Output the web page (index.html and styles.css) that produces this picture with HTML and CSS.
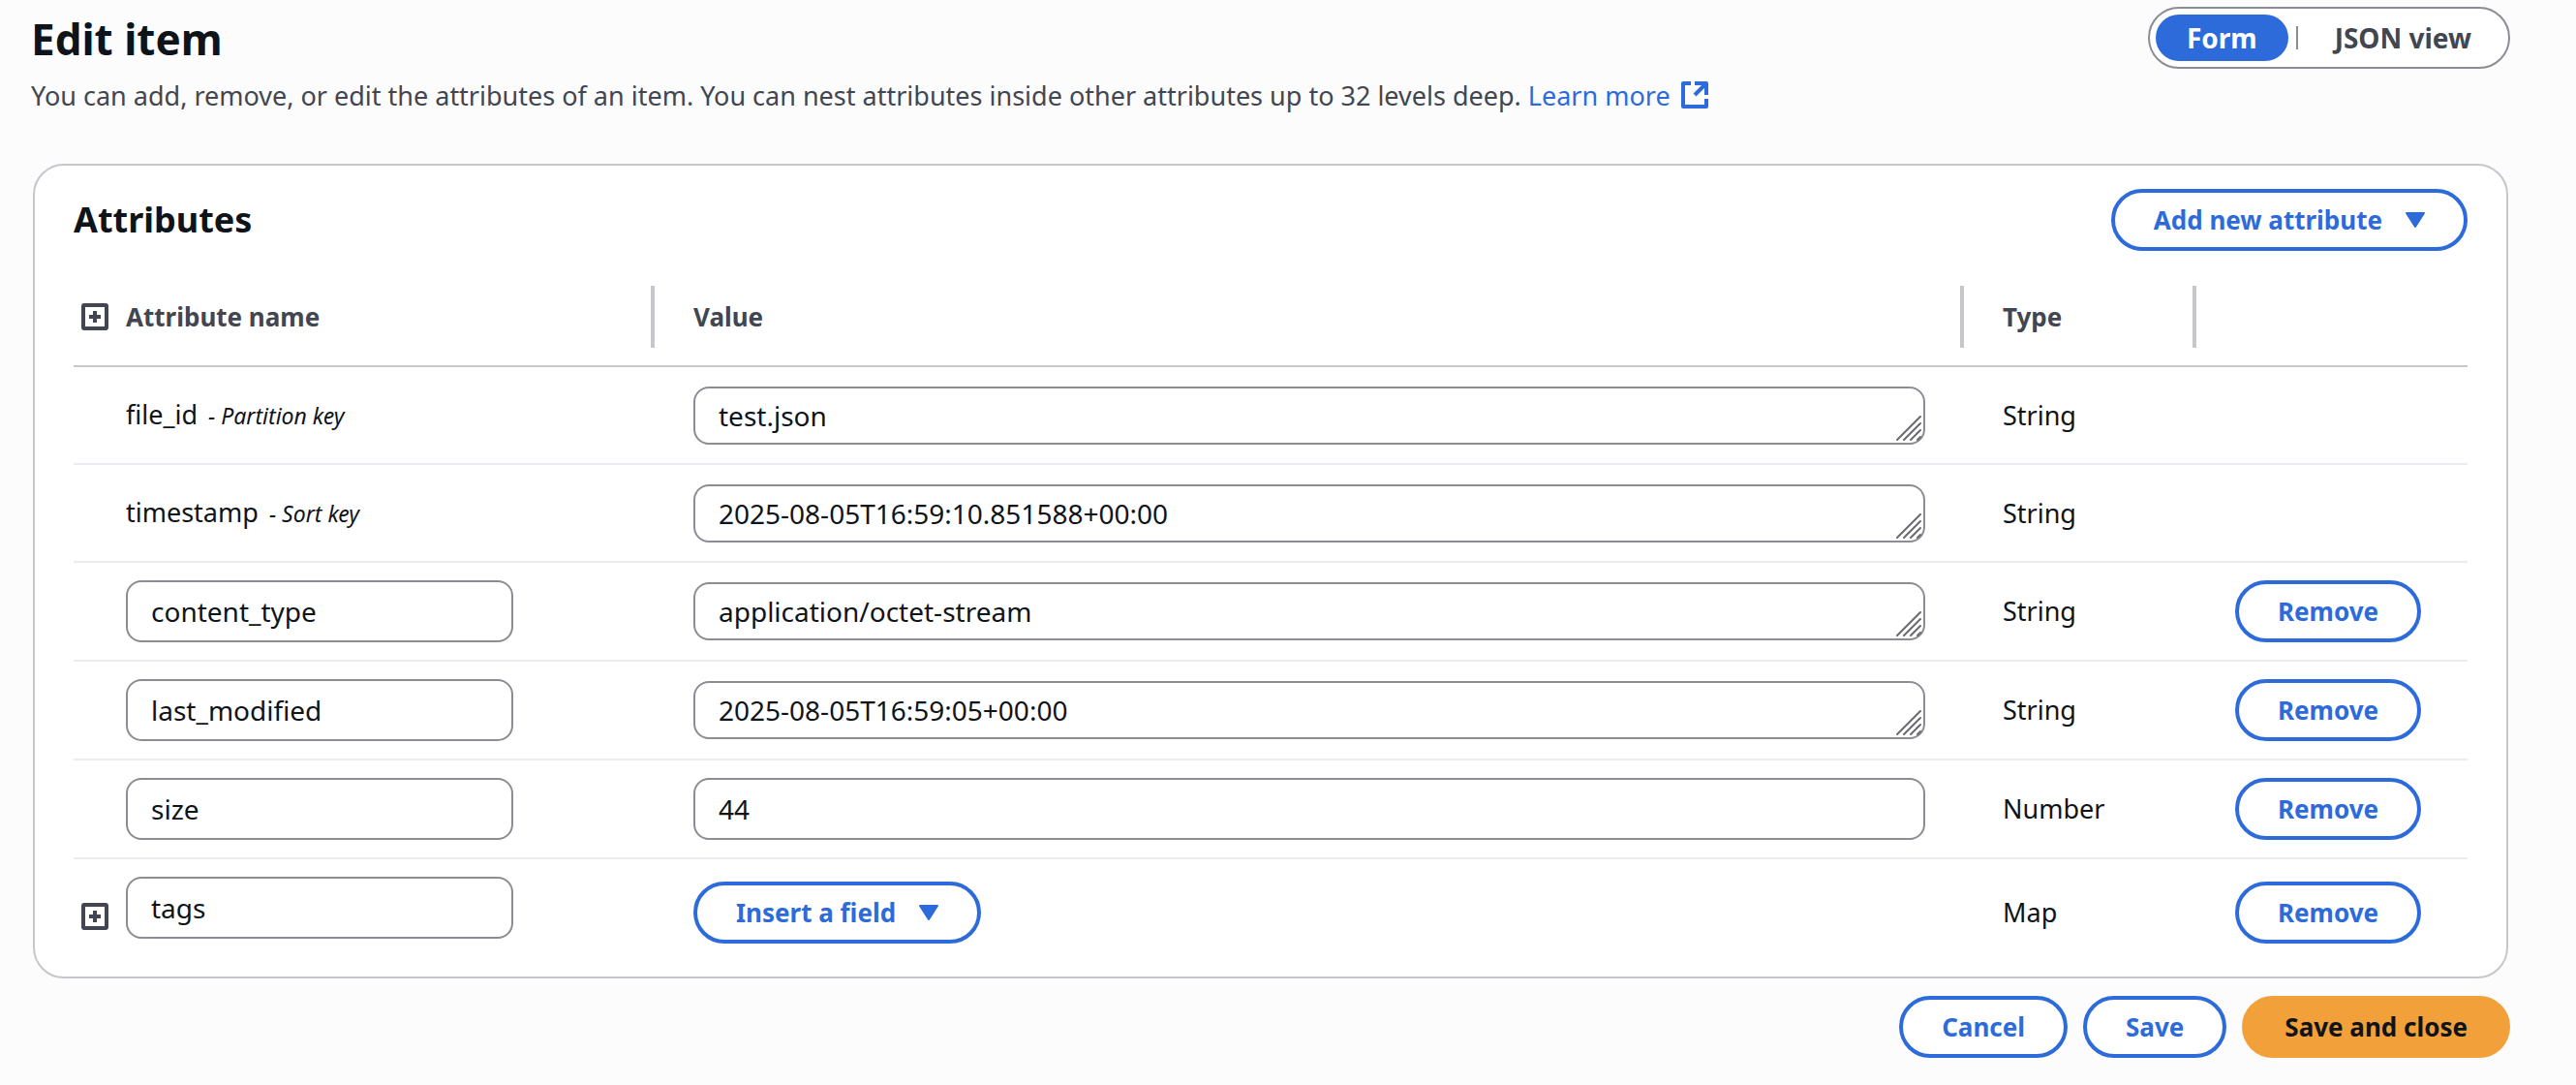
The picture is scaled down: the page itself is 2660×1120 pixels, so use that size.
FILE: index.html
```html
<!DOCTYPE html>
<html lang="en">
<head>
<meta charset="utf-8">
<title>Edit item</title>
<link rel="stylesheet" href="styles.css">
</head>
<body>
<svg class="sprite" aria-hidden="true">
  <symbol id="expand" viewBox="0 0 28 28"><rect x="2" y="2" width="24" height="24" rx="1" fill="none" stroke="currentColor" stroke-width="4"/><path d="M14 8v12M8 14h12" stroke="currentColor" stroke-width="4"/></symbol>
  <symbol id="external" viewBox="0 0 28 28"><path d="M10 2H2v24h24v-8M14 2h12v12M26 2L14 14" fill="none" stroke="currentColor" stroke-width="4" stroke-linejoin="round"/></symbol>
  <symbol id="caret" viewBox="0 0 20 16"><path d="M1 1h18l-9 14z" fill="currentColor" stroke="currentColor" stroke-width="2" stroke-linejoin="round"/></symbol>
  <symbol id="grip" viewBox="0 0 26 26"><path d="M1 25L25 1M8 25L25 8M15 25L25 15M22 25L25 22" stroke="#6b6b6f" stroke-width="2" stroke-linecap="round"/></symbol>
</svg>
<main class="page">
  <header class="page-header">
    <div class="heading">
      <h1>Edit item</h1>
      <p class="description">You can add, remove, or edit the attributes of an item. You can nest attributes inside other attributes up to 32 levels deep. <a href="#learn">Learn more <svg class="icon"><use href="#external"/></svg></a></p>
    </div>
    <div class="segments" role="group" aria-label="View">
      <button type="button" class="segment selected" aria-pressed="true">Form</button>
      <button type="button" class="segment" aria-pressed="false">JSON view</button>
    </div>
  </header>
  <form class="editor">
    <section class="card" aria-labelledby="attributes-title">
      <div class="card-header">
        <h2 id="attributes-title">Attributes</h2>
        <button type="button" class="btn">Add new attribute <svg class="caret"><use href="#caret"/></svg></button>
      </div>
      <table>
        <colgroup><col class="col-name"><col class="col-value"><col class="col-type"><col class="col-action"></colgroup>
        <thead>
          <tr>
            <th scope="col"><div class="name"><button type="button" class="toggle" aria-label="Expand all"><svg class="icon"><use href="#expand"/></svg></button>Attribute name</div></th>
            <th scope="col"><div>Value</div></th>
            <th scope="col"><div>Type</div></th>
            <td></td>
          </tr>
        </thead>
        <tbody>
          <tr>
            <td><div class="name"><label for="v1">file_id <em>- Partition key</em></label></div></td>
            <td><div class="value"><textarea id="v1" rows="1">test.json</textarea><svg class="grip"><use href="#grip"/></svg></div></td>
            <td>String</td><td></td>
          </tr>
          <tr>
            <td><div class="name"><label for="v2">timestamp <em>- Sort key</em></label></div></td>
            <td><div class="value"><textarea id="v2" rows="1">2025-08-05T16:59:10.851588+00:00</textarea><svg class="grip"><use href="#grip"/></svg></div></td>
            <td>String</td><td></td>
          </tr>
          <tr>
            <td><div class="name"><input type="text" aria-label="Attribute name" value="content_type"></div></td>
            <td><div class="value"><textarea rows="1" aria-label="content_type value">application/octet-stream</textarea><svg class="grip"><use href="#grip"/></svg></div></td>
            <td>String</td><td><button type="button" class="btn">Remove</button></td>
          </tr>
          <tr>
            <td><div class="name"><input type="text" aria-label="Attribute name" value="last_modified"></div></td>
            <td><div class="value"><textarea rows="1" aria-label="last_modified value">2025-08-05T16:59:05+00:00</textarea><svg class="grip"><use href="#grip"/></svg></div></td>
            <td>String</td><td><button type="button" class="btn">Remove</button></td>
          </tr>
          <tr>
            <td><div class="name"><input type="text" aria-label="Attribute name" value="size"></div></td>
            <td><input type="text" aria-label="size value" value="44"></td>
            <td>Number</td><td><button type="button" class="btn">Remove</button></td>
          </tr>
          <tr class="nested">
            <td><div class="name"><button type="button" class="toggle" aria-label="Expand tags"><svg class="icon"><use href="#expand"/></svg></button><input type="text" aria-label="Attribute name" value="tags"></div></td>
            <td><button type="button" class="btn">Insert a field <svg class="caret"><use href="#caret"/></svg></button></td>
            <td>Map</td><td><button type="button" class="btn">Remove</button></td>
          </tr>
        </tbody>
      </table>
    </section>
    <footer class="actions">
      <button type="button" class="btn">Cancel</button>
      <button type="button" class="btn">Save</button>
      <button type="submit" class="btn primary">Save and close</button>
    </footer>
  </form>
</main>
</body>
</html>
```
FILE: styles.css
```css
:root {
  --blue: #2d6bdb;
  --ink: #0f141a;
  --muted: #424650;
  --line: #c6c6cd;
  --field: #8c8c94;
}
* { box-sizing: border-box; }
body {
  margin: 0;
  background: #fcfcfd;
  color: var(--ink);
  font: 27px/40px "Noto Sans", "Open Sans", sans-serif;
}
h1, h2, p { margin: 0; }
button, input, textarea { font: inherit; color: inherit; }
.sprite { position: absolute; width: 0; height: 0; }
.page { padding: 7px 68px 24px 32px; }
.page-header { display: flex; justify-content: space-between; align-items: flex-start; margin-bottom: 50px; }
h1 { font-size: 44px; line-height: 60px; font-weight: 700; padding-top: 3px; }
h2 { font-size: 36px; line-height: 48px; font-weight: 700; }
.description { color: var(--muted); padding-top: 9px; }
a { color: var(--blue); text-decoration: none; }
.icon { display: inline-block; width: 28px; height: 28px; vertical-align: -3px; }
a .icon { margin-left: 4px; }
.segments {
  display: flex; align-items: center; height: 64px; padding: 6px;
  background: #fff; border: 2px solid var(--field); border-radius: 32px;
}
.segment {
  height: 48px; padding: 0 32px; border: 0; border-radius: 24px;
  background: none; color: var(--muted); font-size: 28px; font-weight: 700; line-height: 48px;
}
.segment.selected { background: var(--blue); color: #fff; }
.segment + .segment { position: relative; margin-left: 16px; }
.segment + .segment::before {
  content: ""; position: absolute; left: -8px; top: 12px; width: 2px; height: 24px; background: var(--field);
}
.card {
  background: #fff; border: 2px solid var(--line); border-radius: 32px;
  padding: 24px 40px 12px; margin: 0 2px;
}
.card-header { display: flex; justify-content: space-between; align-items: center; margin-bottom: 18px; }
.btn {
  display: inline-flex; align-items: center; gap: 24px; height: 64px; padding: 0 40px;
  background: #fff; border: 4px solid var(--blue); border-radius: 32px;
  color: var(--blue); font-size: 26px; font-weight: 700; white-space: nowrap; vertical-align: top;
}
.btn.primary { background: #f2a03a; border-color: #f2a03a; color: var(--ink); }
.caret { width: 20px; height: 16px; }
table { width: 100%; border-collapse: separate; border-spacing: 0; table-layout: fixed; }
.col-name { width: 600px; }
.col-type { width: 240px; }
.col-action { width: 280px; }
th, td { text-align: left; padding: 18px 40px; vertical-align: middle; }
th { color: var(--muted); font-size: 26px; font-weight: 700; }
thead th, thead td { height: 102px; border-bottom: 2px solid var(--line); }
thead th { padding: 18px 0; }
thead th > div { height: 64px; line-height: 64px; border-right: 4px solid var(--line); padding-left: 40px; }
tbody td { height: 101px; border-bottom: 2px solid #ebebf0; }
th:first-child, td:first-child { padding-left: 0; }
tbody .nested td { height: 109px; border-bottom: 0; }
tbody .nested td:first-child { vertical-align: top; }
.name { display: flex; align-items: center; }
.name, thead th > .name { padding-left: 54px; }
.name input { width: 400px; }
.toggle { display: flex; width: 28px; height: 28px; margin: 0 18px 0 -46px; padding: 0; border: 0; background: none; color: var(--muted); }
.nested .toggle { margin-top: 18px; }
em { font-size: 23px; margin-left: 4px; }
input, textarea {
  display: block; width: 100%; height: 64px; padding: 0 24px; margin: 0;
  background: #fff; border: 2px solid var(--field); border-radius: 16px; font-size: 28px;
}
textarea { height: 60px; line-height: 40px; padding: 8px 24px; resize: none; overflow: hidden; }
.value { position: relative; }
.grip { position: absolute; right: 4px; bottom: 4px; width: 26px; height: 26px; }
.actions { display: flex; justify-content: flex-end; gap: 16px; margin-top: 18px; }
```
